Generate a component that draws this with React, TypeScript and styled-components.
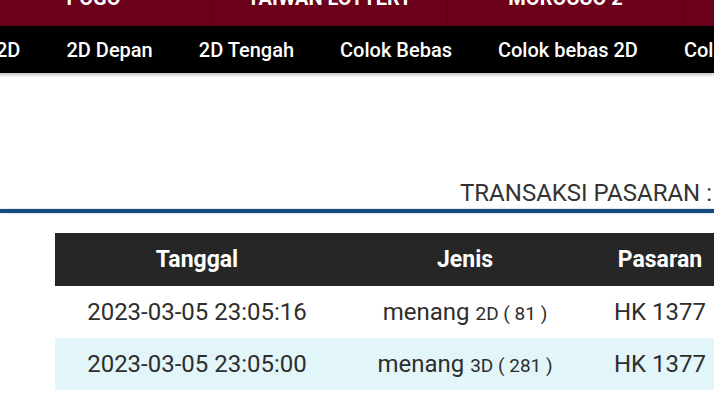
import React from "react";
import styled, { createGlobalStyle } from "styled-components";

const DARK_RED = "#6b001a";
const BLUE_LINE = "#174a7c";

const GlobalStyle = createGlobalStyle`
  html, body {
    margin: 0;
    padding: 0;
    overflow: hidden;
    background: #fff;
    font-family: Roboto, "Liberation Sans", Arial, sans-serif;
  }
`;

const Page = styled.div`
  width: 714px;
  overflow: hidden;
`;

// top market bar, scrolled partly out of view
const MarketBar = styled.div`
  display: flex;
  margin: -15px 0 0 -24px;
  height: 41px;
  background: ${DARK_RED};
`;

const MarketCell = styled.div`
  flex: 0 0 236px;
  height: 41px;
  line-height: 26px;
  text-align: center;
  color: #fff;
  font-weight: 700;
  font-size: 20px;
  text-transform: uppercase;
  white-space: nowrap;
  border-right: 1px solid #5a0015;
  box-sizing: border-box;
`;

const GameNav = styled.div`
  display: flex;
  margin-left: -27px;
  height: 47px;
  align-items: center;
  background: #000;
  white-space: nowrap;
  box-shadow: 0 2px 3px rgba(0, 0, 0, 0.25);
`;

const GameItem = styled.div`
  padding: 0 23px;
  color: #fff;
  font-size: 20px;
  font-weight: 500;
`;

const Title = styled.div`
  margin-top: 106px;
  padding-right: 2px;
  text-align: right;
  font-size: 24px;
  line-height: 28px;
  color: #333;
  white-space: nowrap;
`;

const Divider = styled.div`
  margin-top: 2px;
  height: 4px;
  background: ${BLUE_LINE};
  box-shadow: 0 0 2px rgba(23, 74, 124, 0.4);
`;

const Table = styled.table`
  margin: 20px 0 0 55px;
  border-collapse: collapse;
  table-layout: fixed;
  width: 674px;
`;

const HeadCell = styled.th<{ $w: number }>`
  width: ${(p) => p.$w}px;
  height: 53px;
  padding: 0;
  background: #262626;
  color: #fff;
  font-size: 23px;
  font-weight: 700;
  text-align: center;
`;

const Row = styled.tr<{ $alt?: boolean }>`
  background: ${(p) => (p.$alt ? "#e2f6fa" : "#fff")};
`;

const Cell = styled.td`
  height: 52px;
  padding: 0;
  text-align: center;
  color: #2e2e2e;
  font-size: 24px;
  white-space: nowrap;
`;

const Small = styled.span`
  font-size: 19px;
`;

const markets = ["Pogo", "Taiwan Lottery", "Morocco 2", ""];
const games = ["2D", "2D Depan", "2D Tengah", "Colok Bebas", "Colok bebas 2D", "Colok Jitu"];

const rows = [
  { date: "2023-03-05 23:05:16", type: "2D", num: "81", market: "HK 1377" },
  { date: "2023-03-05 23:05:00", type: "3D", num: "281", market: "HK 1377" },
];

export default function App() {
  return (
    <Page>
      <GlobalStyle />
      <MarketBar>
        {markets.map((m, i) => (
          <MarketCell key={i}>{m}</MarketCell>
        ))}
      </MarketBar>
      <GameNav>
        {games.map((g) => (
          <GameItem key={g}>{g}</GameItem>
        ))}
      </GameNav>
      <Title>TRANSAKSI PASARAN :</Title>
      <Divider />
      <Table>
        <thead>
          <tr>
            <HeadCell $w={284}>Tanggal</HeadCell>
            <HeadCell $w={252}>Jenis</HeadCell>
            <HeadCell $w={138}>Pasaran</HeadCell>
          </tr>
        </thead>
        <tbody>
          {rows.map((r, i) => (
            <Row key={r.date} $alt={i % 2 === 1}>
              <Cell>{r.date}</Cell>
              <Cell>
                menang <Small>{r.type} ( {r.num} )</Small>
              </Cell>
              <Cell>{r.market}</Cell>
            </Row>
          ))}
        </tbody>
      </Table>
    </Page>
  );
}
